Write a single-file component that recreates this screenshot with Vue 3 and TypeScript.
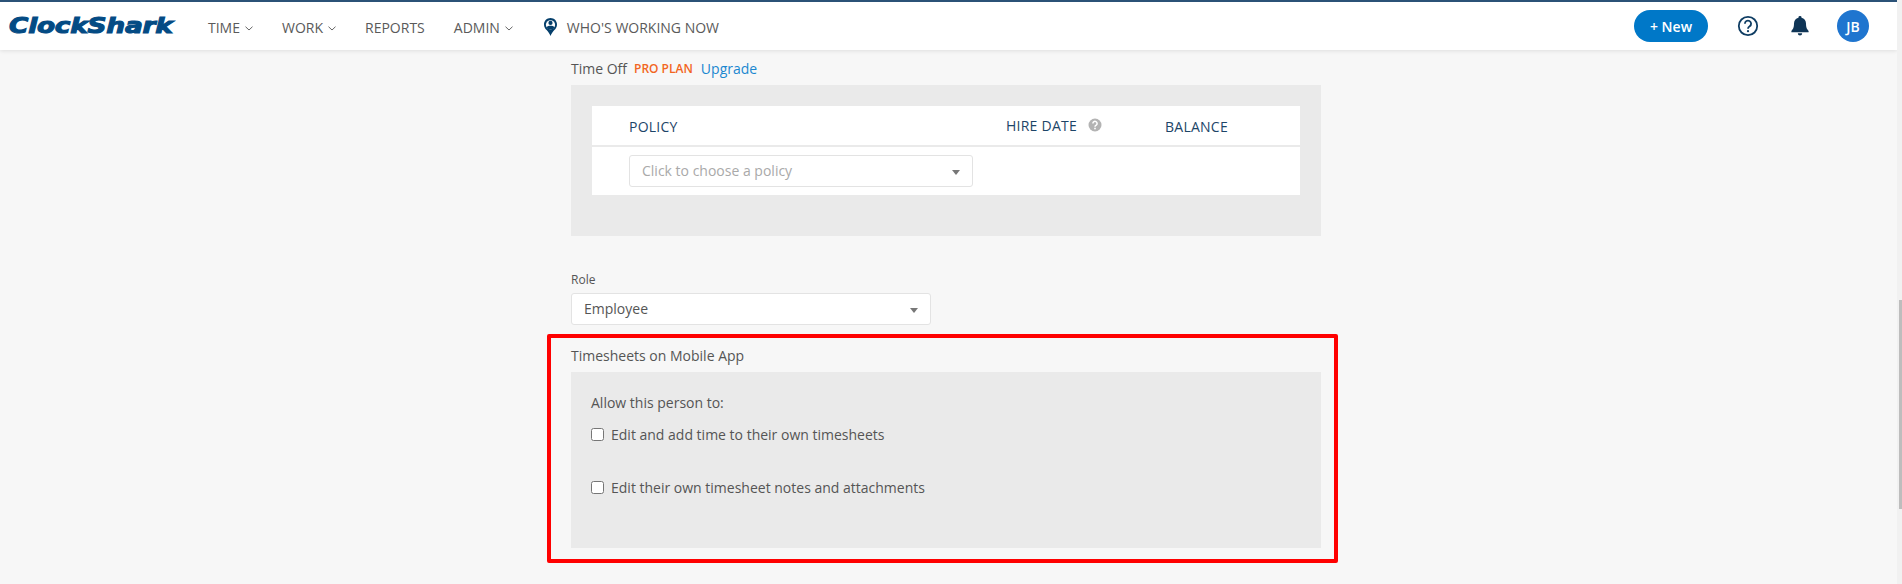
<script setup lang="ts">
interface NavItem { label: string; caret: boolean }
const nav: NavItem[] = [
  { label: 'TIME', caret: true },
  { label: 'WORK', caret: true },
  { label: 'REPORTS', caret: false },
  { label: 'ADMIN', caret: true },
]
const permissions: string[] = [
  'Edit and add time to their own timesheets',
  'Edit their own timesheet notes and attachments',
]
</script>

<template>
  <div class="page">
    <div class="scrollbar"><div class="thumb"></div></div>
    <header class="topbar">
      <div class="logo-box"><span class="logo">ClockShark</span></div>
      <nav class="nav">
        <a v-for="item in nav" :key="item.label" class="nav-item">
          {{ item.label }}
          <svg v-if="item.caret" class="chev" width="8" height="5" viewBox="0 0 8 5"><path d="M.5.7 4 4 7.500.7" fill="none" stroke="#666" stroke-width="1"/></svg>
        </a>
        <a class="nav-item who">
          <svg class="pin" width="13" height="18" viewBox="0 0 13 18">
            <path d="M6.500 0C10.100 0 13 2.800 13 6.400c0 2.400-1.100 4-2.600 5.700-1.500 1.800-3 3.600-3.900 5.900-.9-2.300-2.400-4.100-3.900-5.900C1.100 10.400 0 8.800 0 6.400 0 2.800 2.900 0 6.500 0Z" fill="#053f6b"/>
            <circle cx="6.500" cy="6.800" r="4.600" fill="#fff"/>
            <circle cx="6.500" cy="4.900" r="2.100" fill="#053f6b"/>
            <path d="M2.500 9.200c1-1.200 2.400-1.500 4-1.500s3 .3 4 1.500a4.600 4.600 0 0 1-8 0Z" fill="#053f6b"/>
          </svg>
          WHO'S WORKING NOW
        </a>
      </nav>
      <div class="actions">
        <button class="new-btn">+ New</button>
        <svg class="help" width="22" height="22" viewBox="0 0 22 22">
          <circle cx="11" cy="11" r="9.200" fill="none" stroke="#0f3d63" stroke-width="1.800"/>
          <path d="M7.900 8.700a3.100 3.100 0 1 1 4.800 2.600c-1.100.7-1.700 1.200-1.700 2.500" fill="none" stroke="#0f3d63" stroke-width="1.800"/>
          <circle cx="11" cy="16.200" r="1.100" fill="#0f3d63"/>
        </svg>
        <svg class="bell" width="18" height="20" viewBox="0 0 18 20">
          <path d="M9 0a1.500 1.500 0 0 1 1.500 1.700C13.300 2.400 15 4.700 15 7.600c0 4.400 1.100 5.700 2.600 7.300v1.300H.4v-1.300C1.900 13.300 3 12 3 7.600c0-2.900 1.700-5.200 4.500-5.900A1.500 1.500 0 0 1 9 0Z" fill="#0f3556"/>
          <path d="M6.800 17.300h4.400a2.200 2.200 0 0 1-4.400 0Z" fill="#0f3556"/>
        </svg>
        <div class="avatar">JB</div>
      </div>
    </header>

    <main class="content">
      <section class="time-off">
        <div class="section-title">
          <span>Time Off</span>
          <span class="pro">PRO PLAN</span>
          <a class="upgrade">Upgrade</a>
        </div>
        <div class="panel panel-top">
          <div class="table">
            <div class="thead">
              <span class="th policy">POLICY</span>
              <span class="th hire">HIRE DATE
                <svg width="14" height="14" viewBox="0 0 14 14"><circle cx="7" cy="7" r="6.500" fill="#b3b3b3"/><path d="M4.900 5.500a2.100 2.100 0 1 1 3.300 1.700c-.8.500-1.200.8-1.200 1.600" fill="none" stroke="#fff" stroke-width="1.500"/><rect x="6.200" y="9.700" width="1.600" height="1.600" fill="#fff"/></svg>
              </span>
              <span class="th balance">BALANCE</span>
            </div>
            <div class="tbody">
              <div class="select policy-select">
                <span class="placeholder">Click to choose a policy</span>
                <i class="caret"></i>
              </div>
            </div>
          </div>
        </div>
      </section>

      <section class="role">
        <label class="role-label">Role</label>
        <div class="select role-select">
          <span>Employee</span>
          <i class="caret"></i>
        </div>
      </section>

      <section class="mobile">
        <div class="highlight"></div>
        <div class="section-title mobile-title">Timesheets on Mobile App</div>
        <div class="panel panel-mobile">
          <p class="allow">Allow this person to:</p>
          <label v-for="(text, i) in permissions" :key="i" class="check">
            <input type="checkbox" />
            <span>{{ text }}</span>
          </label>
        </div>
      </section>
    </main>
  </div>
</template>

<style>
html, body { margin: 0; padding: 0; background: #f7f7f7; overflow: hidden; }
</style>

<style scoped>
.page {
  position: relative;
  height: 584px;
  overflow: hidden;
  background: #f7f7f7;
  font-family: "Open Sans", "Liberation Sans", sans-serif;
  color: #555;
  font-size: 14px;
}
.scrollbar { position: absolute; top: 0; right: 0; bottom: 0; width: 5px; background: #f1f1f1; z-index: 3; }
.thumb { margin: 300px 0 0 2px; height: 209px; background: #bdbdbd; }
.topbar {
  display: flex;
  align-items: center;
  box-sizing: border-box;
  width: 1897px;
  height: 50px;
  background: #fff;
  border-top: 2px solid #2b5277;
  box-shadow: 0 1px 4px rgba(0, 0, 0, .1);
  padding-left: 9px;
}
.logo-box { width: 199px; height: 26px; }
.logo {
  display: inline-block;
  transform: scaleX(1.2);
  transform-origin: left center;
  color: #044b84;
  font-family: "DejaVu Sans", sans-serif;
  font-weight: 700;
  font-style: italic;
  font-size: 22px;
  line-height: 26px;
  letter-spacing: -.2px;
  -webkit-text-stroke: 1.1px #044b84;
}
.nav { display: flex; align-items: center; gap: 29px; padding-top: 2px; }
.nav-item { display: flex; align-items: center; gap: 5px; color: #5a5a5a; font-size: 14px; }
.chev { margin-top: 2px; }
.who { gap: 8px; margin-left: 1px; }
.who { padding-left: 1px; }
.pin { margin-right: 2px; }
.actions { display: flex; align-items: center; margin-left: auto; }
.new-btn {
  width: 74px;
  height: 32px;
  border: 0;
  border-radius: 16px;
  background: #0078c8;
  color: #fff;
  font-family: inherit;
  font-size: 14px;
  font-weight: 600;
  padding: 0;
}
.help { margin-left: 29px; }
.bell { margin-left: 32px; }
.avatar {
  width: 32px;
  height: 32px;
  margin-left: 28px;
  margin-right: 28px;
  border-radius: 50%;
  background: #1f75cf;
  color: #fff;
  font-size: 14px;
  font-weight: 600;
  display: flex;
  align-items: center;
  justify-content: center;
}
.content { width: 750px; margin-left: 571px; display: flex; flex-direction: column; }
.section-title { display: flex; align-items: center; height: 19px; font-size: 14px; color: #555; }
.time-off .section-title { margin-top: 9px; }
.pro { margin-left: 7px; color: #f26522; font-size: 12px; font-weight: 600; }
.upgrade { margin-left: 8px; color: #1b87d0; }
.panel { background: #eaeaea; }
.panel-top { margin-top: 7px; height: 151px; padding: 21px; box-sizing: border-box; }
.table { background: #fff; height: 89px; }
.thead { display: flex; align-items: center; height: 38px; padding-top: 1px; border-bottom: 2px solid #eaeaea; }
.th { color: #1d4568; font-size: 14px; letter-spacing: .25px; display: flex; align-items: center; }
.policy { margin-left: 37px; width: 377px; }
.hire { width: 159px; gap: 11px; margin-top: -2px; }
.select {
  display: flex;
  align-items: center;
  justify-content: space-between;
  box-sizing: border-box;
  background: #fff;
  border: 1px solid #e3e3e3;
  border-radius: 3px;
  padding: 0 12px;
}
.select span { margin-bottom: 2px; }
.tbody { padding: 8px 0 0 37px; }
.policy-select { width: 344px; height: 32px; }
.placeholder { color: #a9a9a9; }
.caret {
  width: 0;
  height: 0;
  border-left: 4px solid transparent;
  border-right: 4px solid transparent;
  border-top: 5px solid #777;
  margin-top: 2px;
}
.role { margin-top: 35px; }
.role-label { display: block; font-size: 12px; line-height: 17px; color: #555; }
.role-select { width: 360px; height: 32px; margin-top: 5px; color: #555; }
.mobile { position: relative; }
.highlight {
  position: absolute;
  top: 9px;
  left: -24px;
  width: 791px;
  height: 229px;
  box-sizing: border-box;
  border: 4px solid #f00;
  border-radius: 2px;
  pointer-events: none;
}
.mobile-title { margin-top: 21px; }
.panel-mobile { margin-top: 7px; height: 176px; box-sizing: border-box; padding: 21px 20px 0; }
.allow { margin: 0; font-size: 14px; line-height: 19px; color: #555; }
.check { display: flex; align-items: center; height: 19px; margin-top: 13px; margin-bottom: 34px; color: #555; }
.check + .check { margin-top: 0; }
.check input { width: 13px; height: 13px; margin: 0 7px 0 0; }
</style>
